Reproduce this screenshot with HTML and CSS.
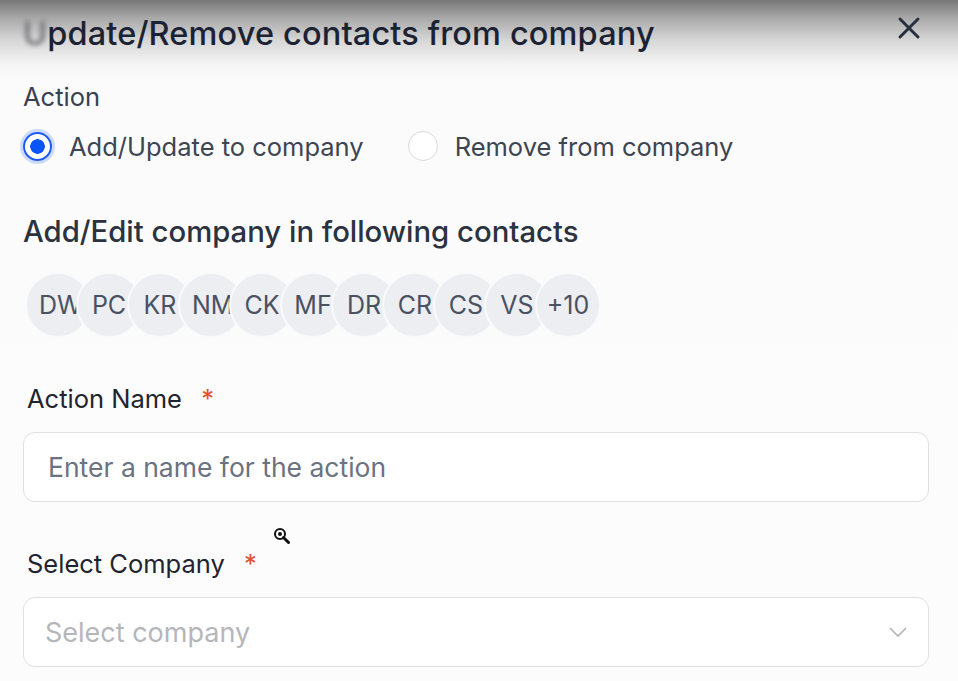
FILE: index.html
```html
<!DOCTYPE html>
<html lang="en">
<head>
    <meta charset="UTF-8">
    <title>Update/Remove contacts from company</title>
    <link rel="stylesheet" href="styles.css">
</head>
<body>
    <div class="modal">
        <div class="modal-header">
            <h1 class="title"><span class="blur">U</span>pdate/Remove contacts from company</h1>
            <button class="close-button" aria-label="Close">
                <svg width="24" height="24" viewBox="0 0 24 24">
                    <path d="M3 3 L21 21 M21 3 L3 21" stroke="#262e40" stroke-width="3" stroke-linecap="round" fill="none"/>
                </svg>
            </button>
        </div>

        <div class="label action-label">Action</div>
        <div class="radio-group">
            <label class="radio-option">
                <span class="radio checked"></span>
                Add/Update to company
            </label>
            <label class="radio-option">
                <span class="radio"></span>
                Remove from company
            </label>
        </div>

        <h2 class="section-title">Add/Edit company in following contacts</h2>
        <div class="avatars">
            <div class="avatar"><span>DW</span></div>
            <div class="avatar"><span>PC</span></div>
            <div class="avatar"><span>KR</span></div>
            <div class="avatar"><span>NM</span></div>
            <div class="avatar"><span>CK</span></div>
            <div class="avatar"><span>MF</span></div>
            <div class="avatar"><span>DR</span></div>
            <div class="avatar"><span>CR</span></div>
            <div class="avatar"><span>CS</span></div>
            <div class="avatar"><span>VS</span></div>
            <div class="avatar more"><span>+10</span></div>
        </div>

        <div class="field">
            <div class="label field-label">Action Name <span class="required">*</span></div>
            <div class="input">Enter a name for the action</div>
        </div>

        <div class="field company-field">
            <div class="label field-label">Select Company <span class="required">*</span></div>
            <div class="input select">
                <span class="select-placeholder">Select company</span>
                <svg width="20" height="12" viewBox="0 0 20 12">
                    <path d="M2 2 L10 10 L18 2" stroke="#b4b4b8" stroke-width="1.6" fill="none"/>
                </svg>
            </div>
            <svg class="cursor" width="18" height="18" viewBox="0 0 18 18">
                <circle cx="7" cy="7" r="5" stroke="#111" stroke-width="2" fill="#fff"/>
                <circle cx="7" cy="7" r="2" fill="#111"/>
                <path d="M10.5 10.5 L15.5 15.5" stroke="#111" stroke-width="3" stroke-linecap="round"/>
            </svg>
        </div>
    </div>
</body>
</html>
```

FILE: styles.css
```css
body {
    margin: 0;
    padding: 0;
    font-family: Inter, "Noto Sans", sans-serif;
    background: linear-gradient(#767676 0px, #a9a9a9 18px, #d6d6d6 40px, #f2f2f2 62px, #fbfbfc 80px, #fcfcfd 100%);
    color: #374151;
    min-height: 681px;
}
.modal {
    padding: 0 29px 0 23px;
}
.modal-header {
    display: flex;
    justify-content: space-between;
    align-items: center;
    padding-top: 14px;
    height: 40px;
}
.title {
    margin: 0;
    font-size: 32.5px;
    line-height: 40px;
    font-weight: 500;
    color: #1b2233;
    letter-spacing: 0.15px;
}
.title .blur {
    filter: blur(2.5px);
    color: #6a6a6e;
}
.close-button {
    border: none;
    background: none;
    padding: 0;
    margin-right: 8px;
    margin-top: -12px;
    width: 24px;
    height: 24px;
}
.label {
    font-size: 25.5px;
    line-height: 30px;
    color: #374151;
}
.action-label {
    margin-top: 28px;
}
.radio-group {
    display: flex;
    gap: 44px;
    margin-top: 17px;
    height: 34px;
    align-items: center;
}
.radio-option {
    display: flex;
    align-items: center;
    gap: 17px;
    font-size: 25.5px;
    color: #3d4452;
}
.radio {
    width: 30px;
    height: 30px;
    box-sizing: border-box;
    border-radius: 50%;
    border: 1.5px solid #dadada;
    background: #fff;
}
.radio.checked {
    width: 29px;
    height: 29px;
    border: 2.5px solid #1d5af5;
    background: radial-gradient(circle, #0b55f7 0 7px, #fff 7.5px);
    box-shadow: 0 0 0 3px rgba(40, 100, 245, 0.22);
}
.section-title {
    margin: 51px 0 0;
    font-size: 29.3px;
    line-height: 36px;
    font-weight: 500;
    color: #2b3240;
}
.avatars {
    display: flex;
    margin-top: 22px;
    padding-left: 2px;
}
.avatar {
    width: 66px;
    height: 66px;
    box-sizing: border-box;
    border-radius: 50%;
    background-color: #eceef2;
    border: 2.5px solid #f9fafb;
    display: flex;
    align-items: center;
    justify-content: center;
    font-size: 25px;
    color: #4a5262;
    margin-left: -15px;
}
.avatar:first-child {
    margin-left: 0;
}
.avatar span {
    width: 38px;
    text-align: center;
    white-space: nowrap;
    overflow: hidden;
}
.avatar.more span {
    width: auto;
}
.field {
    margin-top: 46px;
}
.company-field {
    margin-top: 47px;
    position: relative;
}
.field-label {
    padding-left: 4px;
    color: #1f2430;
}
.required {
    color: #e4502f;
    margin-left: 12px;
}
.input {
    margin-top: 18px;
    height: 70px;
    box-sizing: border-box;
    border: 1.5px solid #dfe0e3;
    border-radius: 12px;
    background: #fff;
    padding: 0 24px;
    display: flex;
    align-items: center;
    font-size: 26.5px;
    color: #6b7280;
}
.select {
    justify-content: space-between;
    padding: 0 20px 0 21px;
    font-size: 27px;
}
.select-placeholder {
    color: #b5b6ba;
}
.cursor {
    position: absolute;
    left: 250px;
    top: -22px;
}
```
